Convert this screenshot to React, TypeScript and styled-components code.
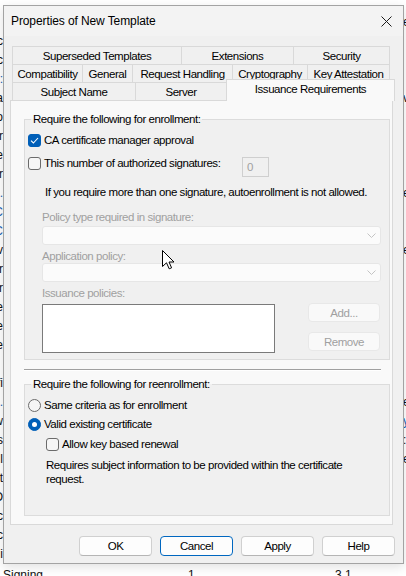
import React from "react";
import styled, { createGlobalStyle } from "styled-components";

const GlobalStyle = createGlobalStyle`
  html, body {
    margin: 0;
    padding: 0;
    background: #fff;
  }
  body {
    font-family: "Liberation Sans", Arial, sans-serif;
  }
`;

// background list of the window behind the dialog
const leftTails = ["", "c", "c", ":", "a", "o", "r", "e", "r", ".", "C", "C", "v", "r", "r", "e", "e", "e", "", "fi", ".", "w", "s", "l", "t", "O", "c", "c", "i"];
const blueRows = [3, 9, 10, 11, 20];
const rightHeads: Record<number, string> = { 0: "e", 4: "v", 9: "e", 12: "e", 20: "e", 21: "y", 22: ":", 23: "e" };

const App: React.FC = () => {
  return (
    <>
      <GlobalStyle />
      <Desktop>
        <BackList>
          {leftTails.map((t, i) => (
            <BackRow key={i}>
              <LeftTail $blue={blueRows.includes(i)}>{t}</LeftTail>
              <RightHead $blue={i === 21}>{rightHeads[i] || ""}</RightHead>
            </BackRow>
          ))}
          <LastRow>
            <span>Signing</span>
            <span>1</span>
            <span>3.1</span>
          </LastRow>
        </BackList>

        <Dialog>
          <TitleBar>
            <Title>Properties of New Template</Title>
            <CloseBtn>
              <svg width="11" height="11" viewBox="0 0 11 11">
                <path d="M0.5 0.5 L10.5 10.5 M10.5 0.5 L0.5 10.5" stroke="#1b1b1b" strokeWidth="1" fill="none" />
              </svg>
            </CloseBtn>
          </TitleBar>

          <Body>
            <TabControl>
              <TabRow>
                <Tab $w={170}>Superseded Templates</Tab>
                <Tab $w={113}>Extensions</Tab>
                <Tab $w={97}>Security</Tab>
              </TabRow>
              <TabRow>
                <Tab $w={71}>Compatibility</Tab>
                <Tab $w={51}>General</Tab>
                <Tab $w={101}>Request Handling</Tab>
                <Tab $w={76}>Cryptography</Tab>
                <Tab $w={83}>Key Attestation</Tab>
              </TabRow>
              <TabRow>
                <Tab $w={124}>Subject Name</Tab>
                <Tab $w={92}>Server</Tab>
                <SelectedTab $w={169}>Issuance Requirements</SelectedTab>
              </TabRow>

              <Panel>
                <GroupBox>
                  <Legend>Require the following for enrollment:</Legend>
                  <CheckRow $mt={7}>
                    <CheckBox $checked>
                      <svg width="9" height="7" viewBox="0 0 9 7">
                        <path d="M1 3.6 L3.4 6 L8 1" stroke="#fff" strokeWidth="1.1" fill="none" />
                      </svg>
                    </CheckBox>
                    <span>CA certificate manager approval</span>
                  </CheckRow>
                  <SigRow>
                    <CheckBox />
                    <span>This number of authorized signatures:</span>
                    <NumBox>0</NumBox>
                  </SigRow>
                  <Note>If you require more than one signature, autoenrollment is not allowed.</Note>

                  <DimLabel $mt={12}>Policy type required in signature:</DimLabel>
                  <Combo $mt={2}>
                    <Chevron />
                  </Combo>
                  <DimLabel $mt={5}>Application policy:</DimLabel>
                  <Combo $mt={0}>
                    <Chevron />
                  </Combo>
                  <DimLabel $mt={5}>Issuance policies:</DimLabel>
                  <PolicyRow>
                    <ListBox />
                    <SideButtons>
                      <DimButton>Add...</DimButton>
                      <DimButton>Remove</DimButton>
                    </SideButtons>
                  </PolicyRow>
                </GroupBox>

                <Separator />

                <GroupBox $pb={29} $mt={6}>
                  <Legend>Require the following for reenrollment:</Legend>
                  <CheckRow $mt={7}>
                    <Radio />
                    <span>Same criteria as for enrollment</span>
                  </CheckRow>
                  <CheckRow $mt={5}>
                    <Radio $on />
                    <span>Valid existing certificate</span>
                  </CheckRow>
                  <CheckRow $mt={6} $indent={21}>
                    <CheckBox />
                    <span>Allow key based renewal</span>
                  </CheckRow>
                  <Hint>Requires subject information to be provided within the certificate request.</Hint>
                </GroupBox>
              </Panel>
            </TabControl>

            <ButtonBar>
              <DlgButton>OK</DlgButton>
              <DlgButton $focus>Cancel</DlgButton>
              <DlgButton>Apply</DlgButton>
              <DlgButton>Help</DlgButton>
            </ButtonBar>
          </Body>
        </Dialog>

        <Cursor width="13" height="20" viewBox="0 0 13 20">
          <path d="M0.5 0.5 L0.5 16.5 L4.5 12.8 L7.2 18.8 L9.6 17.8 L7 12 L12 12 Z" fill="#fff" stroke="#000" strokeWidth="1" strokeLinejoin="round" />
        </Cursor>
      </Desktop>
    </>
  );
};

const Chevron: React.FC = () => (
  <svg width="9" height="5" viewBox="0 0 9 5">
    <path d="M0.5 0.5 L4.5 4.5 L8.5 0.5" stroke="#c4c4c4" strokeWidth="1" fill="none" />
  </svg>
);

export default App;

const Desktop = styled.div`
  position: relative;
  width: 406px;
  height: 576px;
  overflow: hidden;
  background: #fff;
`;

const BackList = styled.div`
  display: flex;
  flex-direction: column;
  padding-top: 12px;
  font-size: 12px;
  color: #111;
`;

const BackRow = styled.div`
  display: flex;
  align-items: center;
  height: 19px;
`;

const LeftTail = styled.span<{ $blue?: boolean }>`
  display: flex;
  justify-content: flex-end;
  width: 3px;
  overflow: hidden;
  white-space: nowrap;
  color: ${(p) => (p.$blue ? "#1a5fb4" : "#111")};
`;

const RightHead = styled.span<{ $blue?: boolean }>`
  margin-left: auto;
  width: 3px;
  overflow: hidden;
  white-space: nowrap;
  color: ${(p) => (p.$blue ? "#1a5fb4" : "#111")};
`;

const LastRow = styled.div`
  display: grid;
  grid-template-columns: 185px 147px auto;
  height: 19px;
  align-items: center;
  padding-left: 3px;
  margin-top: 2px;
`;

const Dialog = styled.div`
  position: absolute;
  left: 3px;
  top: 5px;
  width: 401px;
  height: 559px;
  box-sizing: border-box;
  border: 1px solid #a3a3a3;
  background: #f0f0f0;
  display: flex;
  flex-direction: column;
  box-shadow: 0 3px 10px rgba(0, 0, 0, 0.12);
  font-family: "Liberation Sans", Arial, sans-serif;
  font-size: 11.5px;
  letter-spacing: -0.45px;
  color: #000;
`;

const TitleBar = styled.div`
  display: flex;
  align-items: center;
  height: 30px;
  padding: 0 11px 0 7px;
  background: #f3f3f3;
`;

const Title = styled.span`
  font-size: 12px;
  letter-spacing: -0.1px;
`;

const CloseBtn = styled.span`
  display: flex;
  margin-left: auto;
`;

const Body = styled.div`
  flex: 1;
  display: flex;
  flex-direction: column;
  padding: 10px 8px 0 6px;
`;

const TabControl = styled.div`
  display: flex;
  flex-direction: column;
  margin-right: 2px;
`;

const TabRow = styled.div`
  display: flex;
  height: 18px;
  margin: 0 2px;
`;

const Tab = styled.div<{ $w: number }>`
  flex: 0 0 ${(p) => p.$w}px;
  height: 18px;
  box-sizing: border-box;
  display: flex;
  align-items: center;
  justify-content: center;
  border: 1px solid #d9d9d9;
  border-bottom: none;
  background: #f0f0f0;
  white-space: nowrap;
  & + & {
    margin-left: -1px;
  }
`;

const SelectedTab = styled(Tab)`
  position: relative;
  z-index: 1;
  height: 22px;
  margin: -3px -2px 0 -3px;
  padding-bottom: 3px;
  background: #f9f9f9;
`;

const Panel = styled.div`
  height: 425px;
  box-sizing: border-box;
  border: 1px solid #d9d9d9;
  background: #f9f9f9;
  padding: 11px 2px 0 13px;
  display: flex;
  flex-direction: column;
`;

const GroupBox = styled.fieldset<{ $pb?: number; $mt?: number }>`
  margin: ${(p) => p.$mt || 0}px 0 0 0;
  padding: 0 0 ${(p) => p.$pb ?? 6}px 0;
  min-width: 0;
  border: 1px solid #dcdcdc;
  background: #f0f0f0;
  display: flex;
  flex-direction: column;
`;

const Legend = styled.legend`
  margin-left: 6px;
  padding: 0 2px;
  line-height: 14px;
`;

const CheckRow = styled.div<{ $mt: number; $indent?: number }>`
  display: flex;
  align-items: center;
  gap: 3px;
  height: 14px;
  margin-top: ${(p) => p.$mt}px;
  padding-left: ${(p) => p.$indent ?? 3}px;
  white-space: nowrap;
`;

const SigRow = styled.div`
  display: grid;
  grid-template-columns: 13px 195px 27px;
  column-gap: 3px;
  align-items: start;
  margin-top: 10px;
  padding-left: 3px;
  line-height: 13px;
  white-space: nowrap;
`;

const CheckBox = styled.span<{ $checked?: boolean }>`
  flex: 0 0 13px;
  width: 13px;
  height: 13px;
  box-sizing: border-box;
  display: flex;
  align-items: center;
  justify-content: center;
  border-radius: 3px;
  border: 1px solid ${(p) => (p.$checked ? "#005fb8" : "#6b6b6b")};
  background: ${(p) => (p.$checked ? "#005fb8" : "#f6f6f6")};
`;

const Radio = styled.span<{ $on?: boolean }>`
  flex: 0 0 13px;
  width: 13px;
  height: 13px;
  box-sizing: border-box;
  display: flex;
  align-items: center;
  justify-content: center;
  border-radius: 50%;
  border: 1px solid ${(p) => (p.$on ? "#005fb8" : "#6b6b6b")};
  background: ${(p) => (p.$on ? "#005fb8" : "#f6f6f6")};
  &::after {
    content: "";
    display: ${(p) => (p.$on ? "block" : "none")};
    width: 5px;
    height: 5px;
    border-radius: 50%;
    background: #fff;
  }
`;

const NumBox = styled.span`
  height: 20px;
  box-sizing: border-box;
  display: flex;
  align-items: center;
  padding-left: 4px;
  border: 1px solid #cfcfcf;
  background: #f0f0f0;
  color: #a0a0a0;
`;

const Note = styled.div`
  margin-top: 8px;
  padding-left: 20px;
  line-height: 14px;
  white-space: nowrap;
`;

const DimLabel = styled.div<{ $mt: number }>`
  margin-top: ${(p) => p.$mt}px;
  padding-left: 17px;
  line-height: 13px;
  color: #a0a0a0;
`;

const Combo = styled.div<{ $mt: number }>`
  height: 19px;
  box-sizing: border-box;
  margin: ${(p) => p.$mt}px 8px 0 17px;
  display: flex;
  align-items: center;
  justify-content: flex-end;
  padding-right: 4px;
  border: 1px solid #e6e6e6;
  border-radius: 3px;
  background: #fbfbfb;
`;

const PolicyRow = styled.div`
  display: flex;
  margin-top: 3px;
  padding: 0 9px 0 17px;
`;

const ListBox = styled.div`
  width: 233px;
  height: 49px;
  margin-top: 1px;
  box-sizing: border-box;
  border: 1px solid #7a7a7a;
  background: #fff;
`;

const SideButtons = styled.div`
  display: flex;
  flex-direction: column;
  gap: 10px;
  margin-left: auto;
`;

const DimButton = styled.div`
  width: 72px;
  height: 19px;
  box-sizing: border-box;
  display: flex;
  align-items: center;
  justify-content: center;
  border: 1px solid #e8e8e8;
  border-radius: 4px;
  background: #f9f9f9;
  color: #a0a0a0;
`;

const Separator = styled.div`
  margin: 9px 9px 0 0;
  border-top: 1px solid #a0a0a0;
  border-bottom: 1px solid #fff;
`;

const Hint = styled.div`
  width: 320px;
  margin-top: 8px;
  padding-left: 21px;
  line-height: 13.5px;
`;

const ButtonBar = styled.div`
  display: flex;
  justify-content: flex-end;
  gap: 8px;
  margin-top: 11px;
`;

const DlgButton = styled.div<{ $focus?: boolean }>`
  width: 73px;
  height: 20px;
  box-sizing: border-box;
  display: flex;
  align-items: center;
  justify-content: center;
  border: 1px solid ${(p) => (p.$focus ? "#0067c0" : "#d0d0d0")};
  border-bottom-color: ${(p) => (p.$focus ? "#0067c0" : "#b5b5b5")};
  border-radius: 4px;
  background: #fdfdfd;
`;

const Cursor = styled.svg`
  position: absolute;
  left: 162px;
  top: 250px;
`;
